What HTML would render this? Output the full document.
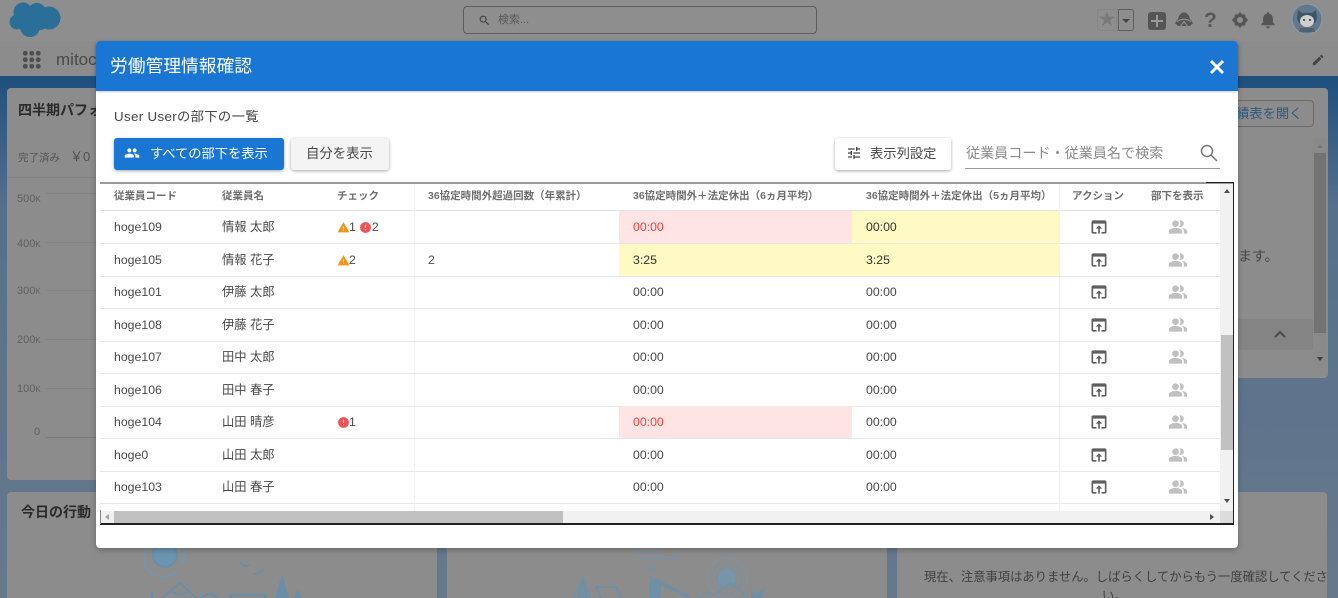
<!DOCTYPE html>
<html lang="ja"><head><meta charset="utf-8"><title>労働管理情報確認</title>
<style>
*{box-sizing:border-box}
html,body{margin:0;padding:0;width:1338px;height:598px;overflow:hidden;background:#5f7083}
body{font-family:"Liberation Sans","Noto Sans CJK JP",sans-serif;color:#444}
#p{position:absolute;left:0;top:0;width:1338px;height:598px;overflow:hidden;filter:blur(.3px)}
.a{position:absolute;white-space:nowrap}
.card{position:absolute;background:#8c8c8c;border-radius:4px}
.row{position:absolute;left:100px;width:1120px;height:33px;border-bottom:1px solid #e8e8e8;font-size:12.3px;color:#484848}
.row span{position:absolute;top:0;line-height:32px;white-space:nowrap}
.row i{position:absolute;top:0;height:32px;display:block}
.c1{left:14px}.c2{left:122px}.c3{left:237px}.c4{left:328px}.c5{left:533px}.c6{left:766px}
.row svg{position:absolute;width:20px;height:20px;top:6px}
.act{left:989px;fill:#5f5f5f}.ppl{left:1068px;fill:#c0c0c0}
.h{position:absolute;top:190px;font-size:10.5px;font-weight:bold;color:#6e6e6e;line-height:13px;white-space:nowrap}
.pk{color:#f44336}.b{color:#333}
.ax{position:absolute;font-size:11px;color:#606060;left:17px}
.gl{position:absolute;left:46px;width:50px;height:1px;background:#838383}
</style></head><body><div id="p">
<svg width="0" height="0" style="position:absolute"><defs>
<symbol id="open" viewBox="0 0 24 24"><path d="M19 4H5c-1.11 0-2 .9-2 2v12c0 1.1.89 2 2 2h4v-2H5V8h14v10h-4v2h4c1.1 0 2-.9 2-2V6c0-1.1-.89-2-2-2zm-7 6l-4 4h3v6h2v-6h3l-4-4z"/></symbol>
<symbol id="people" viewBox="0 0 24 24"><path d="M16 11c1.66 0 2.99-1.34 2.99-3S17.66 5 16 5c-1.66 0-3 1.34-3 3s1.34 3 3 3zm-8 0c1.66 0 2.99-1.34 2.99-3S9.66 5 8 5C6.34 5 5 6.34 5 8s1.34 3 3 3zm0 2c-2.33 0-7 1.17-7 3.5V19h14v-2.5c0-2.33-4.67-3.5-7-3.5zm8 0c-.29 0-.62.02-.97.05 1.16.84 1.97 1.97 1.97 3.45V19h6v-2.5c0-2.33-4.67-3.5-7-3.5z"/></symbol>
<symbol id="palt" viewBox="0 0 24 24"><path d="M16.67 13.13C18.04 14.06 19 15.32 19 17v3h4v-3c0-2.18-3.57-3.47-6.33-3.87z"/><circle cx="9" cy="8" r="4"/><path d="M15 12c2.21 0 4-1.79 4-4s-1.79-4-4-4c-.47 0-.91.1-1.33.24C14.5 5.27 15 6.58 15 8s-.5 2.73-1.33 3.76c.42.14.86.24 1.33.24z"/><path d="M9 13c-2.67 0-8 1.34-8 4v3h16v-3c0-2.66-5.33-4-8-4z"/></symbol>
<symbol id="warn" viewBox="0 0 24 24"><path d="M1 21h22L12 2 1 21zm12-3h-2v-2h2v2zm0-4h-2v-4h2v4z"/></symbol>
<symbol id="err" viewBox="0 0 24 24"><path d="M12 2C6.48 2 2 6.48 2 12s4.48 10 10 10 10-4.48 10-10S17.52 2 12 2zm1 15h-2v-2h2v2zm0-4h-2V7h2v6z"/></symbol>
</defs></svg>

<!-- page background -->
<div class="a" style="left:0;top:0;width:1338px;height:41px;background:#8e8e8e"></div>
<div class="a" style="left:0;top:41px;width:1338px;height:35px;background:#8c8c8c"></div>
<div class="a" style="left:0;top:76px;width:1338px;height:130px;background:linear-gradient(#1f4f7e,#55708c)"></div>
<div class="a" style="left:0;top:206px;width:1338px;height:392px;background:linear-gradient(#55708c,#67788c)"></div>

<svg class="a" style="left:0;top:0" width="70" height="40" viewBox="0 0 70 40" fill="#2a6f98"><circle cx="23" cy="12" r="9.500"/><circle cx="37" cy="12" r="9"/><circle cx="49" cy="18" r="11.500"/><circle cx="17" cy="22" r="7.500"/><circle cx="30" cy="27" r="10"/><circle cx="40" cy="23" r="7"/></svg>
<div class="a" style="left:463px;top:6px;width:354px;height:28px;border:1px solid #5e5e5e;border-radius:4px"></div>
<svg class="a" style="left:478px;top:14px" width="13" height="13" viewBox="0 0 24 24"><path fill="#444" d="M15.5 14h-.79l-.28-.27C15.41 12.59 16 11.11 16 9.5 16 5.91 13.09 3 9.5 3S3 5.91 3 9.5 5.91 16 9.5 16c1.61 0 3.09-.59 4.23-1.57l.27.28v.79l5 4.99L20.49 19l-4.99-5zm-6 0C7.01 14 5 11.99 5 9.5S7.01 5 9.5 5 14 7.01 14 9.500 11.99 14 9.500 14z"/></svg>
<div class="a" style="left:498px;top:13px;font-size:11px;line-height:14px;color:#5a5a5a">検索...</div>

<div class="a" style="left:1097px;top:9px;width:20px;height:22px;border:1px solid #868686;border-radius:3px 0 0 3px;color:#7a7a7a;font-size:17px;line-height:20px;text-align:center">★</div>
<div class="a" style="left:1118px;top:9px;width:16px;height:22px;border:1px solid #606060;border-radius:0 3px 3px 0"></div>
<div class="a" style="left:1122px;top:19px;width:0;height:0;border:4px solid transparent;border-top:4px solid #444;border-bottom:0"></div>
<div class="a" style="left:1148px;top:12px;width:18px;height:18px;background:#555;border-radius:3px"></div>
<div class="a" style="left:1156px;top:15px;width:2px;height:12px;background:#9a9a9a"></div>
<div class="a" style="left:1151px;top:20px;width:12px;height:2px;background:#9a9a9a"></div>
<svg class="a" style="left:1175px;top:12px" width="18" height="17" viewBox="0 0 18 17"><path fill="#555" d="M9 .5C12 .5 14 3 15 7l3 4-3 3H3l-3-3 3-4C4 3 6 .5 9 .5z"/><path fill="none" stroke="#8e8e8e" stroke-width="1.200" d="M2 9.500Q9 5 16 9.500M5.500 14 9 9.500l3.500 4.500"/></svg>
<div class="a" style="left:1204px;top:9px;font-size:21px;line-height:24px;font-weight:bold;color:#585858">?</div>
<svg class="a" style="left:1231px;top:11px" width="18" height="18" viewBox="0 0 24 24"><path fill="#555" fill-rule="evenodd" d="M12 1l2.500 3.500h4l1 4L23 12l-3.500 3.500-1 4h-4L12 23l-2.500-3.500h-4l-1-4L1 12l3.500-3.500 1-4h4zM12 8a4 4 0 1 0 0 8 4 4 0 0 0 0-8z"/></svg>
<svg class="a" style="left:1259px;top:11px" width="18" height="18" viewBox="0 0 24 24"><path fill="#555" d="M12 23a2.500 2.500 0 0 0 2.500-2.500h-5A2.500 2.500 0 0 0 12 23zm9-5-2.500-3v-5c0-3.200-2-5.800-5-6.500V3a1.500 1.500 0 0 0-3 0v.5c-3 .7-5 3.300-5 6.500v5L3 18v1h18z"/></svg>
<svg class="a" style="left:1291px;top:3px" width="32" height="32" viewBox="0 0 32 32"><circle cx="16" cy="16" r="15" fill="#63788c" stroke="#8f9aa3"/><path fill="#3f5266" d="M7 7l4 3h10l4-3 1 9-2 4H8l-2-4z"/><ellipse cx="16" cy="18" rx="7" ry="6" fill="#cfcfcf"/><circle cx="13" cy="17" r="1" fill="#333"/><circle cx="19" cy="17" r="1" fill="#333"/><path fill="#4e6274" d="M9 25h14l1 4H8z"/></svg>

<div class="a" style="left:22px;top:50px;width:20px;height:20px;background:radial-gradient(circle,#4f4f4f 2.200px,transparent 2.600px) 0 0/6.500px 6.500px"></div>
<div class="a" style="left:56px;top:49px;font-size:17px;line-height:22px;color:#4a4a4a">mitoc</div>
<svg class="a" style="left:1311px;top:53px" width="14" height="14" viewBox="0 0 24 24"><path fill="#444" d="M3 17.250V21h3.750L17.810 9.940l-3.750-3.750L3 17.250zM20.710 7.040a1 1 0 0 0 0-1.410l-2.340-2.340a1 1 0 0 0-1.410 0l-1.830 1.830 3.750 3.750 1.830-1.830z"/></svg>

<!-- left cards -->
<div class="card" style="left:7px;top:88px;width:100px;height:392px"></div>
<div class="a" style="left:18px;top:100px;font-size:14px;line-height:20px;font-weight:bold;color:#2b2b2b">四半期パフォ</div>
<div class="a" style="left:18px;top:150px;font-size:10.500px;line-height:16px;color:#555">完了済み</div>
<div class="a" style="left:70px;top:148px;font-size:13px;line-height:18px;color:#505050">￥0</div>
<div class="a" style="left:7px;top:177px;width:89px;height:1px;background:#838383"></div>
<div class="ax" style="top:193px">500<small style="font-size:8px">K</small></div>
<div class="ax" style="top:238px">400<small style="font-size:8px">K</small></div>
<div class="ax" style="top:285px">300<small style="font-size:8px">K</small></div>
<div class="ax" style="top:334px">200<small style="font-size:8px">K</small></div>
<div class="ax" style="top:383px">100<small style="font-size:8px">K</small></div>
<div class="ax" style="top:426px;left:34px">0</div>
<div class="gl" style="top:193px"></div><div class="gl" style="top:242px"></div><div class="gl" style="top:290px"></div><div class="gl" style="top:339px"></div><div class="gl" style="top:388px"></div><div class="gl" style="top:437px;background:#7a7a7a"></div>
<div class="card" style="left:7px;top:492px;width:430px;height:120px"></div>
<div class="a" style="left:21px;top:502px;font-size:14px;line-height:20px;font-weight:bold;color:#2b2b2b">今日の行動</div>
<div class="card" style="left:447px;top:492px;width:440px;height:120px"></div>
<div class="card" style="left:897px;top:492px;width:430px;height:120px"></div>
<svg class="a" style="left:0;top:540px" width="900" height="58" viewBox="0 540 900 58" fill="none">
<g stroke="#6a8ea6" stroke-width="2">
<circle cx="165" cy="555" r="12" fill="#6a94b0" stroke="#6a8ea6"/>
<path d="M147 548a19 19 0 0 0 30 23M184 548a20 20 0 0 1-3 16" stroke="#7595aa"/>
<path d="M240 562l5 4 5-1M253 574l6-1 5-3" stroke-width="1.500"/>
<path d="M152 598v-6M162 598l18-15 16 15M172 592l8 3 7-3M200 598l10-5 8 5"/>
<path d="M231 598v-3h34v3" stroke-width="2.500"/>
<path d="M282 578l-6 20h12z" fill="#6a8ea6"/>
<path d="M298 592l-3 6h6z" fill="#6a8ea6"/>
</g>
<g stroke="#6f8fa4" stroke-width="2">
<path d="M583 577l-10 21M583 577l7 21" stroke="#7391a5"/><path d="M583 580l-5 18h9z" fill="#7391a5"/>
<path d="M596 587h20l5 11M596 587l5 11"/>
<path d="M634 553h30M640 559h38M655 566h-8M648 566q-3 4 2 4h8" stroke="#7c8f9c"/>
<path d="M650 577l4 2 36 19" stroke-width="3"/><rect x="650" y="580" width="10" height="18" rx="3" fill="#6f8fa4"/>
<circle cx="727" cy="578" r="10" fill="#7795a8" stroke="#7c8f9c"/>
<circle cx="727" cy="578" r="15" stroke="#7f8f99" stroke-width="1.500"/><circle cx="727" cy="578" r="20" stroke="#85909a" stroke-width="1.500"/>
<path d="M698 598l10-6 6 3 16-12 18 14" stroke="#7391a5"/>
<path d="M752 598v-6l5 3 6-5-2 8z" fill="#6f8fa4"/>
</g></svg>
<div class="a" style="left:924px;top:569px;font-size:12.300px;line-height:17px;color:#404040">現在、注意事項はありません。しばらくしてからもう一度確認してくださ</div>
<div class="a" style="left:1102px;top:588px;font-size:12.300px;line-height:17px;color:#404040">い。</div>

<!-- right card -->
<div class="card" style="left:1100px;top:88px;width:228px;height:290px"></div>
<div class="a" style="left:1200px;top:100px;width:114px;height:27px;border:1px solid #6a6a6a;border-radius:4px"></div>
<div class="a" style="left:1236px;top:105px;font-size:13.300px;line-height:18px;color:#2d5a80">績表を開く</div>
<div class="a" style="left:1238px;top:246px;font-size:14px;line-height:20px;color:#484848">ます。</div>
<div class="a" style="left:1238px;top:319px;width:75px;height:31px;background:#848484"></div>
<svg class="a" style="left:1272px;top:329px" width="16" height="10" viewBox="0 0 16 10"><path fill="none" stroke="#484848" stroke-width="2" d="M3 8l5-5 5 5"/></svg>
<div class="a" style="left:1313px;top:138px;width:14px;height:230px;background:#8a8a8a"></div>
<div class="a" style="left:1314px;top:153px;width:12px;height:180px;background:#737373"></div>
<div class="a" style="left:1317px;top:144px;width:0;height:0;border:3px solid transparent;border-bottom:4px solid #777;border-top:0"></div>
<div class="a" style="left:1317px;top:357px;width:0;height:0;border:3px solid transparent;border-top:4px solid #3d3d3d;border-bottom:0"></div>

<!-- modal -->
<div class="a" style="left:96px;top:41px;width:1142px;height:507px;background:#fff;border-radius:4px;box-shadow:0 2px 6px rgba(0,0,0,.25)"></div>
<div class="a" style="left:96px;top:41px;width:1142px;height:50px;background:#1976d2;border-radius:4px 4px 0 0;box-shadow:0 1px 2px rgba(0,0,0,.2)"></div>
<div class="a" style="left:110px;top:54px;font-size:17.750px;line-height:25px;color:#fff">労働管理情報確認</div>
<svg class="a" style="left:1209px;top:59px" width="16" height="16" viewBox="0 0 16 16"><path stroke="#fff" stroke-width="3" d="M2 2l12 12M14 2L2 14"/></svg>
<div class="a" style="left:114px;top:107px;font-size:13.300px;letter-spacing:.35px;line-height:19px;color:#444">User Userの部下の一覧</div>

<div class="a" style="left:114px;top:138px;width:170px;height:32px;background:#1976d2;border-radius:3px;box-shadow:0 1px 3px rgba(0,0,0,.35)"></div>
<svg class="a" style="left:124px;top:145px" width="16" height="16" viewBox="0 0 24 24" fill="#fff"><use href="#people"/></svg>
<div class="a" style="left:150px;top:144px;font-size:13.250px;line-height:19px;color:#fff">すべての部下を表示</div>
<div class="a" style="left:291px;top:138px;width:98px;height:32px;background:#f4f4f4;border-radius:3px;box-shadow:0 1px 3px rgba(0,0,0,.35)"></div>
<div class="a" style="left:306px;top:144px;font-size:13.400px;line-height:19px;color:#484848">自分を表示</div>
<div class="a" style="left:835px;top:138px;width:116px;height:32px;background:#fff;border-radius:3px;box-shadow:0 1px 3px rgba(0,0,0,.35)"></div>
<svg class="a" style="left:846px;top:145px" width="16" height="16" viewBox="0 0 24 24"><path fill="#444" d="M3 17v2h6v-2H3zM3 5v2h10V5H3zm10 16v-2h8v-2h-8v-2h-2v6h2zM7 9v2H3v2h4v2h2V9H7zm14 4v-2H11v2h10zm-6-4h2V7h4V5h-4V3h-2v6z"/></svg>
<div class="a" style="left:870px;top:144px;font-size:13.300px;line-height:19px;color:#484848">表示列設定</div>
<div class="a" style="left:966px;top:143px;font-size:14.100px;line-height:20px;color:#8a8a8a">従業員コード・従業員名で検索</div>
<svg class="a" style="left:1198px;top:142px" width="22" height="22" viewBox="0 0 22 22" fill="none" stroke="#777" stroke-width="1.500"><circle cx="9" cy="9" r="5.500"/><path d="M13 13l6 6"/></svg>
<div class="a" style="left:965px;top:168px;width:255px;height:1px;background:#9a9a9a"></div>

<!-- table frame -->
<div class="a" style="left:100px;top:182px;width:1134px;height:2px;background:#9a9a9a"></div>
<div class="a" style="left:1206px;top:182px;width:28px;height:1px;background:#222"></div>
<div class="a" style="left:1233px;top:182px;width:1px;height:342px;background:#222"></div>
<div class="a" style="left:100px;top:523px;width:1134px;height:1.500px;background:#222"></div>
<div class="a" style="left:100px;top:510px;width:1px;height:14px;background:#888"></div>
<div class="a" style="left:101px;top:210px;width:1119px;height:1px;background:#e0e0e0"></div>
<div class="h" style="left:114px">従業員コード</div>
<div class="h" style="left:222px">従業員名</div>
<div class="h" style="left:337px">チェック</div>
<div class="h" style="left:428px">36協定時間外超過回数（年累計）</div>
<div class="h" style="left:633px">36協定時間外＋法定休出（6ヵ月平均）</div>
<div class="h" style="left:866px">36協定時間外＋法定休出（5ヵ月平均）</div>
<div class="h" style="left:1072px">アクション</div>
<div class="h" style="left:1151px">部下を表示</div>

<div class="row" style="top:211px"><i style="left:519px;width:233px;background:#ffe4e6"></i><i style="left:752px;width:207px;background:#fff9c4"></i><span class="c1">hoge109</span><span class="c2">情報 太郎</span><span class="c3"><svg viewBox="0 0 24 24" style="position:absolute;left:0;top:10px;width:13px;height:13px;fill:#f5921e"><use href="#warn"/></svg><b style="font-weight:400;margin-left:12px">1</b><svg viewBox="0 0 24 24" style="position:absolute;left:22px;top:10px;width:13px;height:13px;fill:#f44f55"><use href="#err"/></svg><b style="font-weight:400;margin-left:16px">2</b></span><span class="c5 pk">00:00</span><span class="c6 b">00:00</span><svg class="act" viewBox="0 0 24 24"><use href="#open"/></svg><svg class="ppl" viewBox="0 0 24 24"><use href="#palt"/></svg></div>
<div class="row" style="top:243.500px"><i style="left:519px;width:233px;background:#fff9c4"></i><i style="left:752px;width:207px;background:#fff9c4"></i><span class="c1">hoge105</span><span class="c2">情報 花子</span><span class="c3"><svg viewBox="0 0 24 24" style="position:absolute;left:0;top:10px;width:13px;height:13px;fill:#f5921e"><use href="#warn"/></svg><b style="font-weight:400;margin-left:12px">2</b></span><span class="c4">2</span><span class="c5 b">3:25</span><span class="c6 b">3:25</span><svg class="act" viewBox="0 0 24 24"><use href="#open"/></svg><svg class="ppl" viewBox="0 0 24 24"><use href="#palt"/></svg></div>
<div class="row" style="top:276px"><span class="c1">hoge101</span><span class="c2">伊藤 太郎</span><span class="c5">00:00</span><span class="c6">00:00</span><svg class="act" viewBox="0 0 24 24"><use href="#open"/></svg><svg class="ppl" viewBox="0 0 24 24"><use href="#palt"/></svg></div>
<div class="row" style="top:308.500px"><span class="c1">hoge108</span><span class="c2">伊藤 花子</span><span class="c5">00:00</span><span class="c6">00:00</span><svg class="act" viewBox="0 0 24 24"><use href="#open"/></svg><svg class="ppl" viewBox="0 0 24 24"><use href="#palt"/></svg></div>
<div class="row" style="top:341px"><span class="c1">hoge107</span><span class="c2">田中 太郎</span><span class="c5">00:00</span><span class="c6">00:00</span><svg class="act" viewBox="0 0 24 24"><use href="#open"/></svg><svg class="ppl" viewBox="0 0 24 24"><use href="#palt"/></svg></div>
<div class="row" style="top:373.500px"><span class="c1">hoge106</span><span class="c2">田中 春子</span><span class="c5">00:00</span><span class="c6">00:00</span><svg class="act" viewBox="0 0 24 24"><use href="#open"/></svg><svg class="ppl" viewBox="0 0 24 24"><use href="#palt"/></svg></div>
<div class="row" style="top:406px"><i style="left:519px;width:233px;background:#ffe4e6"></i><span class="c1">hoge104</span><span class="c2">山田 晴彦</span><span class="c3"><svg viewBox="0 0 24 24" style="position:absolute;left:0;top:10px;width:13px;height:13px;fill:#f44f55"><use href="#err"/></svg><b style="font-weight:400;margin-left:12px">1</b></span><span class="c5 pk">00:00</span><span class="c6">00:00</span><svg class="act" viewBox="0 0 24 24"><use href="#open"/></svg><svg class="ppl" viewBox="0 0 24 24"><use href="#palt"/></svg></div>
<div class="row" style="top:438.500px"><span class="c1">hoge0</span><span class="c2">山田 太郎</span><span class="c5">00:00</span><span class="c6">00:00</span><svg class="act" viewBox="0 0 24 24"><use href="#open"/></svg><svg class="ppl" viewBox="0 0 24 24"><use href="#palt"/></svg></div>
<div class="row" style="top:471px"><span class="c1">hoge103</span><span class="c2">山田 春子</span><span class="c5">00:00</span><span class="c6">00:00</span><svg class="act" viewBox="0 0 24 24"><use href="#open"/></svg><svg class="ppl" viewBox="0 0 24 24"><use href="#palt"/></svg></div>
<div class="a" style="left:414px;top:184px;width:1px;height:327px;background:#f3f3f3"></div>
<div class="a" style="left:1059px;top:184px;width:1px;height:327px;background:#f3f3f3"></div>

<!-- scrollbars -->
<div class="a" style="left:1220px;top:184px;width:13px;height:327px;background:#f1f1f1"></div>
<div class="a" style="left:1221px;top:335px;width:12px;height:115px;background:#c1c1c1"></div>
<div class="a" style="left:1224px;top:189px;width:0;height:0;border:3px solid transparent;border-bottom:4px solid #505050;border-top:0"></div>
<div class="a" style="left:1224px;top:499px;width:0;height:0;border:3px solid transparent;border-top:4px solid #505050;border-bottom:0"></div>
<div class="a" style="left:101px;top:511px;width:1132px;height:12px;background:#f1f1f1"></div>
<div class="a" style="left:114px;top:511px;width:449px;height:12px;background:#c1c1c1"></div>
<div class="a" style="left:1220px;top:511px;width:13px;height:12px;background:#dcdcdc"></div>
<div class="a" style="left:105px;top:514px;width:0;height:0;border:3px solid transparent;border-right:4px solid #a3a3a3;border-left:0"></div>
<div class="a" style="left:1210px;top:514px;width:0;height:0;border:3px solid transparent;border-left:4px solid #505050;border-right:0"></div>
</div></body></html>
